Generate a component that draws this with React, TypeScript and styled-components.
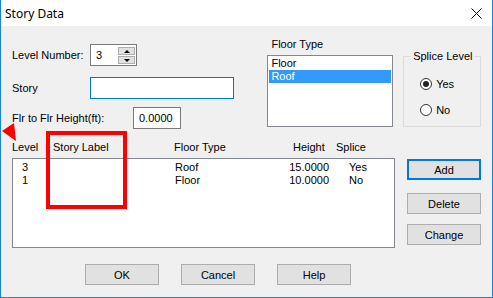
import styled, { createGlobalStyle } from 'styled-components'

const GlobalStyle = createGlobalStyle`
    html, body{
        margin: 0;
        padding: 0;
        background: #f0f0f0;
    }
    body{
        font-family: "Liberation Sans", Arial, sans-serif;
        font-size: 11px;
        color: #000;
    }
`

const Window = styled.div`
    position: relative;
    width: 493px;
    height: 298px;
    box-sizing: border-box;
    border: 1px solid #1883d7;
    border-top: none;
    background: #f0f0f0;
    display: flex;
    flex-direction: column;
    overflow: hidden;
`

const TitleBar = styled.div`
    height: 26px;
    background: #fff;
    display: flex;
    align-items: center;
    justify-content: space-between;
    padding: 0 10px 0 4px;
    font-family: "Noto Sans", "Open Sans", sans-serif;
    font-size: 12px;
`

const Body = styled.div`
    flex: 1;
    display: flex;
    flex-direction: column;
    padding: 0 11px;
`

const TopSection = styled.div`
    height: 105px;
    display: flex;
    align-items: flex-start;
`

const LeftForm = styled.div`
    width: 256px;
    padding-top: 18px;
    display: flex;
    flex-direction: column;
`

const FieldRow = styled.div<{ $gap?: number }>`
    display: flex;
    align-items: center;
    height: 22px;
    margin-top: ${p => p.$gap ?? 0}px;
`

const Label = styled.span<{ $width: number }>`
    width: ${p => p.$width}px;
    flex-shrink: 0;
`

const TextBox = styled.div<{ $width: number; $focused?: boolean }>`
    width: ${p => p.$width}px;
    height: 22px;
    box-sizing: border-box;
    border: 1px solid ${p => (p.$focused ? '#0078d7' : '#7a7a7a')};
    background: #fff;
    padding-left: 5px;
    display: flex;
    align-items: center;
`

const SpinBox = styled(TextBox)`
    padding-right: 1px;
    justify-content: space-between;
`

const SpinButtons = styled.div`
    display: flex;
    flex-direction: column;
    gap: 1px;
    align-self: flex-start;
    padding-top: 2px;
`

const SpinButton = styled.div<{ $down?: boolean }>`
    width: 17px;
    height: 8px;
    box-sizing: border-box;
    background: #e1e1e1;
    border: 1px solid #adadad;
    display: flex;
    align-items: center;
    justify-content: center;

    &::after{
        content: '';
        border-left: 3px solid transparent;
        border-right: 3px solid transparent;
        ${p => (p.$down ? 'border-top: 3px solid #000;' : 'border-bottom: 3px solid #000;')}
    }
`

const FloorTypeCol = styled.div`
    width: 126px;
    padding-top: 12px;
    display: flex;
    flex-direction: column;
`

const SmallCaption = styled.div`
    height: 13px;
    line-height: 13px;
    padding-left: 4px;
`

const ListBox = styled.div<{ $height: number }>`
    margin-top: 4px;
    height: ${p => p.$height}px;
    box-sizing: border-box;
    border: 1px solid #828790;
    background: #fff;
    padding: 1px;
`

const ListItem = styled.div<{ $selected?: boolean }>`
    height: 13px;
    line-height: 13px;
    padding-left: 2px;
    background: ${p => (p.$selected ? '#3399ff' : 'transparent')};
    color: ${p => (p.$selected ? '#fff' : '#000')};
`

const GroupBox = styled.fieldset`
    margin: 24px 0 0 10px;
    width: 78px;
    height: 77px;
    box-sizing: border-box;
    border: 1px solid #dcdcdc;
    padding: 0 0 0 16px;
    display: flex;
    flex-direction: column;

    legend{
        margin-left: -9px;
        padding: 0 2px;
        line-height: 13px;
    }
`

const RadioRow = styled.div<{ $gap: number }>`
    display: flex;
    align-items: center;
    gap: 4px;
    height: 13px;
    margin-top: ${p => p.$gap}px;
`

const RadioDot = styled.span<{ $checked?: boolean }>`
    width: 12px;
    height: 12px;
    box-sizing: border-box;
    border: 1px solid #333;
    border-radius: 50%;
    background: #fff;
    display: flex;
    align-items: center;
    justify-content: center;

    &::after{
        content: '';
        width: 6px;
        height: 6px;
        border-radius: 50%;
        background: ${p => (p.$checked ? '#222' : 'transparent')};
    }
`

const HeaderRow = styled.div`
    margin-top: 10px;
    height: 13px;
    line-height: 13px;
    display: flex;
`

const HeaderCell = styled.span<{ $width?: number }>`
    width: ${p => (p.$width ? `${p.$width}px` : 'auto')};
    flex-shrink: 0;
`

const MainRow = styled.div`
    margin-top: 4px;
    display: flex;
    align-items: flex-start;
`

const StoryList = styled.div`
    width: 383px;
    height: 90px;
    box-sizing: border-box;
    border: 1px solid #828790;
    background: #fff;
    padding-top: 2px;
`

const DataRow = styled.div`
    display: grid;
    grid-template-columns: 162px 110px 44px auto;
    height: 13px;
    line-height: 13px;
`

const Cell = styled.span<{ $align?: 'left' | 'right'; $pad?: number }>`
    text-align: ${p => p.$align ?? 'left'};
    padding-left: ${p => p.$pad ?? 0}px;
`

const SideButtons = styled.div`
    margin-left: 12px;
    padding-top: 1px;
    display: flex;
    flex-direction: column;
`

const Button = styled.div<{ $default?: boolean; $gap?: number }>`
    width: 74px;
    height: 21px;
    box-sizing: border-box;
    margin-top: ${p => p.$gap ?? 0}px;
    background: #e1e1e1;
    border: ${p => (p.$default ? '2px solid #0078d7' : '1px solid #adadad')};
    display: flex;
    align-items: center;
    justify-content: center;
`

const BottomBar = styled.div`
    margin-top: 16px;
    padding-left: 73px;
    display: flex;
    gap: 22px;
`

const Highlight = styled.div`
    position: absolute;
    left: 45px;
    top: 131px;
    width: 81px;
    height: 78px;
    box-sizing: border-box;
    border: 4px solid #ff0000;
`

const Pointer = styled.svg`
    position: absolute;
    left: 0;
    top: 120px;
`

const rows = [
    { level: '3', type: 'Roof', height: '15.0000', splice: 'Yes' },
    { level: '1', type: 'Floor', height: '10.0000', splice: 'No' },
]

export default function App() {
    return (
        <>
            <GlobalStyle />
            <Window>
                <TitleBar>
                    <span>Story Data</span>
                    <svg width="11" height="11" viewBox="0 0 11 11">
                        <path d="M0.5 0.5 L10.5 10.5 M10.5 0.5 L0.5 10.5" stroke="#000" strokeWidth="1" />
                    </svg>
                </TitleBar>
                <Body>
                    <TopSection>
                        <LeftForm>
                            <FieldRow>
                                <Label $width={78}>Level Number:</Label>
                                <SpinBox $width={47}>
                                    <span>3</span>
                                    <SpinButtons>
                                        <SpinButton />
                                        <SpinButton $down />
                                    </SpinButtons>
                                </SpinBox>
                            </FieldRow>
                            <FieldRow $gap={11}>
                                <Label $width={78}>Story</Label>
                                <TextBox $width={144} $focused />
                            </FieldRow>
                            <FieldRow $gap={8}>
                                <Label $width={121}>Flr to Flr Height(ft):</Label>
                                <TextBox $width={48}>0.0000</TextBox>
                            </FieldRow>
                        </LeftForm>
                        <FloorTypeCol>
                            <SmallCaption>Floor Type</SmallCaption>
                            <ListBox $height={72}>
                                <ListItem>Floor</ListItem>
                                <ListItem $selected>Roof</ListItem>
                            </ListBox>
                        </FloorTypeCol>
                        <GroupBox>
                            <legend>Splice Level</legend>
                            <RadioRow $gap={14}>
                                <RadioDot $checked />
                                <span>Yes</span>
                            </RadioRow>
                            <RadioRow $gap={13}>
                                <RadioDot />
                                <span>No</span>
                            </RadioRow>
                        </GroupBox>
                    </TopSection>

                    <HeaderRow>
                        <HeaderCell $width={41}>Level</HeaderCell>
                        <HeaderCell $width={121}>Story Label</HeaderCell>
                        <HeaderCell $width={119}>Floor Type</HeaderCell>
                        <HeaderCell $width={43}>Height</HeaderCell>
                        <HeaderCell>Splice</HeaderCell>
                    </HeaderRow>

                    <MainRow>
                        <StoryList>
                            {rows.map(r => (
                                <DataRow key={r.level}>
                                    <Cell $pad={9}>{r.level}</Cell>
                                    <Cell>{r.type}</Cell>
                                    <Cell $align="right">{r.height}</Cell>
                                    <Cell $pad={20}>{r.splice}</Cell>
                                </DataRow>
                            ))}
                        </StoryList>
                        <SideButtons>
                            <Button $default>Add</Button>
                            <Button $gap={13}>Delete</Button>
                            <Button $gap={10}>Change</Button>
                        </SideButtons>
                    </MainRow>

                    <BottomBar>
                        <Button>OK</Button>
                        <Button>Cancel</Button>
                        <Button>Help</Button>
                    </BottomBar>
                </Body>

                <Highlight />
                <Pointer width="18" height="24" viewBox="0 0 18 24">
                    <polygon points="13,3 1,11 15,21" fill="#ff0000" />
                </Pointer>
            </Window>
        </>
    )
}
